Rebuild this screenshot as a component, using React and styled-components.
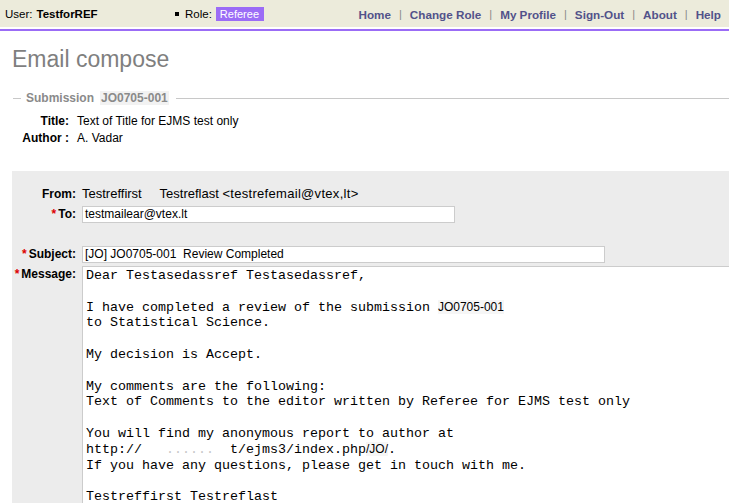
import React from 'react'
import styled, { createGlobalStyle } from 'styled-components'

const GlobalStyle = createGlobalStyle`
  html, body {
    margin: 0;
    padding: 0;
    background: #fff;
    overflow: hidden;
  }
  body {
    font-family: "Liberation Sans", Arial, sans-serif;
    font-size: 12px;
    color: #000;
  }
`;

const Page = styled.div`
  width: 729px;
  height: 503px;
  overflow: hidden;
  display: flex;
  flex-direction: column;
`;

const Header = styled.header`
  flex: none;
  padding-bottom: 2px;
  border-bottom: 2px solid #9b6cf6;
`;

const TopBar = styled.div`
  height: 27px;
  background-color: #ecebdb;
  display: flex;
  align-items: center;
  padding: 1px 8px 0 5px;
  box-sizing: border-box;
  font-size: 11.5px;
`;

const UserBlock = styled.div`
  width: 170px;
  display: flex;
  align-items: center;
  gap: 4px;
`;

const UserName = styled.b`
  font-weight: bold;
`;

const RoleBlock = styled.div`
  display: flex;
  align-items: center;
  gap: 4px;
`;

const Bullet = styled.span`
  width: 4px;
  height: 4px;
  background: #000;
  margin-right: 2px;
`;

const RoleBadge = styled.span`
  background-color: #9b6cf6;
  color: #fff;
  padding: 1px 5px 0 4px;
  line-height: 13px;
  font-size: 11px;
`;

const Nav = styled.nav`
  margin-left: auto;
  display: flex;
  align-items: center;
`;

const NavLink = styled.a`
  color: #52528a;
  font-weight: bold;
  font-size: 11.7px;
  text-decoration: none;
`;

const NavSep = styled.span`
  color: #888;
  margin: 0 8px;
  font-size: 11px;
`;

const Heading = styled.h1`
  margin: 15px 0 0 12px;
  font-size: 23px;
  font-weight: normal;
  color: #7f7f7f;
  line-height: 27px;
`;

const Legend = styled.div`
  display: flex;
  align-items: center;
  margin: 18px 0 0 13px;
  height: 16px;
  &::before {
    content: '';
    width: 8px;
    border-top: 1px solid #c8c8c8;
    margin-right: 5px;
  }
  &::after {
    content: '';
    flex: 1;
    border-top: 1px solid #c8c8c8;
    margin-left: 7px;
  }
`;

const LegendText = styled.span`
  color: #8a8a8a;
  font-weight: bold;
  font-size: 12px;
`;

const LegendCode = styled.span`
  background: #f2f2f2;
  margin-left: 6px;
  padding: 0 1px;
`;

const InfoList = styled.div`
  display: grid;
  grid-template-columns: 57px auto;
  column-gap: 8px;
  row-gap: 1px;
  margin: 8px 0 0 12px;
  justify-content: start;
  line-height: 16px;
`;

const InfoLabel = styled.div`
  text-align: right;
  font-weight: bold;
`;

const InfoValue = styled.div``;

const Panel = styled.div`
  flex: 1;
  margin: 25px 0 0 12px;
  background-color: #ececec;
  padding-top: 15px;
  display: grid;
  grid-template-columns: 64px 1fr;
  column-gap: 6px;
  align-content: start;
`;

const Label = styled.div`
  text-align: right;
  font-weight: bold;
  font-size: 12px;
  line-height: 16px;
  margin-top: ${({ $top }) => $top || 0}px;
`;

const Req = styled.span`
  color: #d00;
  font-weight: bold;
  margin-right: 2px;
`;

const Field = styled.div`
  margin-top: ${({ $top }) => $top || 0}px;
  min-width: 0;
`;

const FromValue = styled.div`
  font-size: 13px;
  line-height: 16px;
  white-space: pre;
`;

const Email = styled.span`
  letter-spacing: 0.3px;
`;

const TextBox = styled.div`
  width: ${({ $w }) => $w}px;
  height: 17px;
  box-sizing: border-box;
  background: #fff;
  border: 1px solid #cccccc;
  padding: 0 2px;
  font-size: 12px;
  line-height: 15px;
  white-space: pre;
`;

const MessageBox = styled.div`
  width: 700px;
  height: 260px;
  background: #fff;
  border-top: 1px solid #cccccc;
  border-left: 1px solid #cccccc;
  padding: 1px 0 0 3px;
  font-family: "Liberation Mono", "Courier New", monospace;
  font-size: 13.33px;
  line-height: 15.8px;
  white-space: pre;
  overflow: hidden;
`;

const SansChunk = styled.span`
  font-family: "Liberation Sans", Arial, sans-serif;
  font-size: 12px;
  background: #f6f6f6;
`;

const Blur = styled.span`
  color: #c8c8c8;
`;

const navItems = ['Home', 'Change Role', 'My Profile', 'Sign-Out', 'About', 'Help'];

export default function App() {
  return (
    <Page>
      <GlobalStyle />
      <Header>
        <TopBar>
          <UserBlock>
            User: <UserName>TestforREF</UserName>
          </UserBlock>
          <RoleBlock>
            <Bullet />
            Role: <RoleBadge>Referee</RoleBadge>
          </RoleBlock>
          <Nav>
            {navItems.map((item, i) => (
              <React.Fragment key={item}>
                {i > 0 && <NavSep>|</NavSep>}
                <NavLink href="#">{item}</NavLink>
              </React.Fragment>
            ))}
          </Nav>
        </TopBar>
      </Header>

      <Heading>Email compose</Heading>

      <Legend>
        <LegendText>
          Submission<LegendCode>JO0705-001</LegendCode>
        </LegendText>
      </Legend>

      <InfoList>
        <InfoLabel>Title:</InfoLabel>
        <InfoValue>Text of Title for EJMS test only</InfoValue>
        <InfoLabel>Author :</InfoLabel>
        <InfoValue>A. Vadar</InfoValue>
      </InfoList>

      <Panel>
        <Label>From:</Label>
        <Field>
          <FromValue>
            {'Testreffirst     Testreflast '}
            <Email>&lt;testrefemail@vtex,lt&gt;</Email>
          </FromValue>
        </Field>

        <Label $top={4}><Req>*</Req>To:</Label>
        <Field $top={4}>
          <TextBox $w={373}>testmailear@vtex.lt</TextBox>
        </Field>

        <Label $top={23}><Req>*</Req>Subject:</Label>
        <Field $top={23}>
          <TextBox $w={523}>[JO] JO0705-001  Review Completed</TextBox>
        </Field>

        <Label $top={3}><Req>*</Req>Message:</Label>
        <Field $top={3}>
          <MessageBox>
            {'Dear Testasedassref Testasedassref,\n\n'}
            {'I have completed a review of the submission '}
            <SansChunk>JO0705-001</SansChunk>
            {'\nto Statistical Science.\n\n'}
            {'My decision is Accept.\n\n'}
            {'My comments are the following:\n'}
            {'Text of Comments to the editor written by Referee for EJMS test only\n\n'}
            {'You will find my anonymous report to author at\n'}
            {'http://   '}
            <Blur>......  </Blur>
            {'t/ejms3/index.php'}
            <SansChunk>/JO/</SansChunk>
            {'.\n'}
            {'If you have any questions, please get in touch with me.\n\n'}
            {'Testreffirst Testreflast'}
          </MessageBox>
        </Field>
      </Panel>
    </Page>
  );
}
